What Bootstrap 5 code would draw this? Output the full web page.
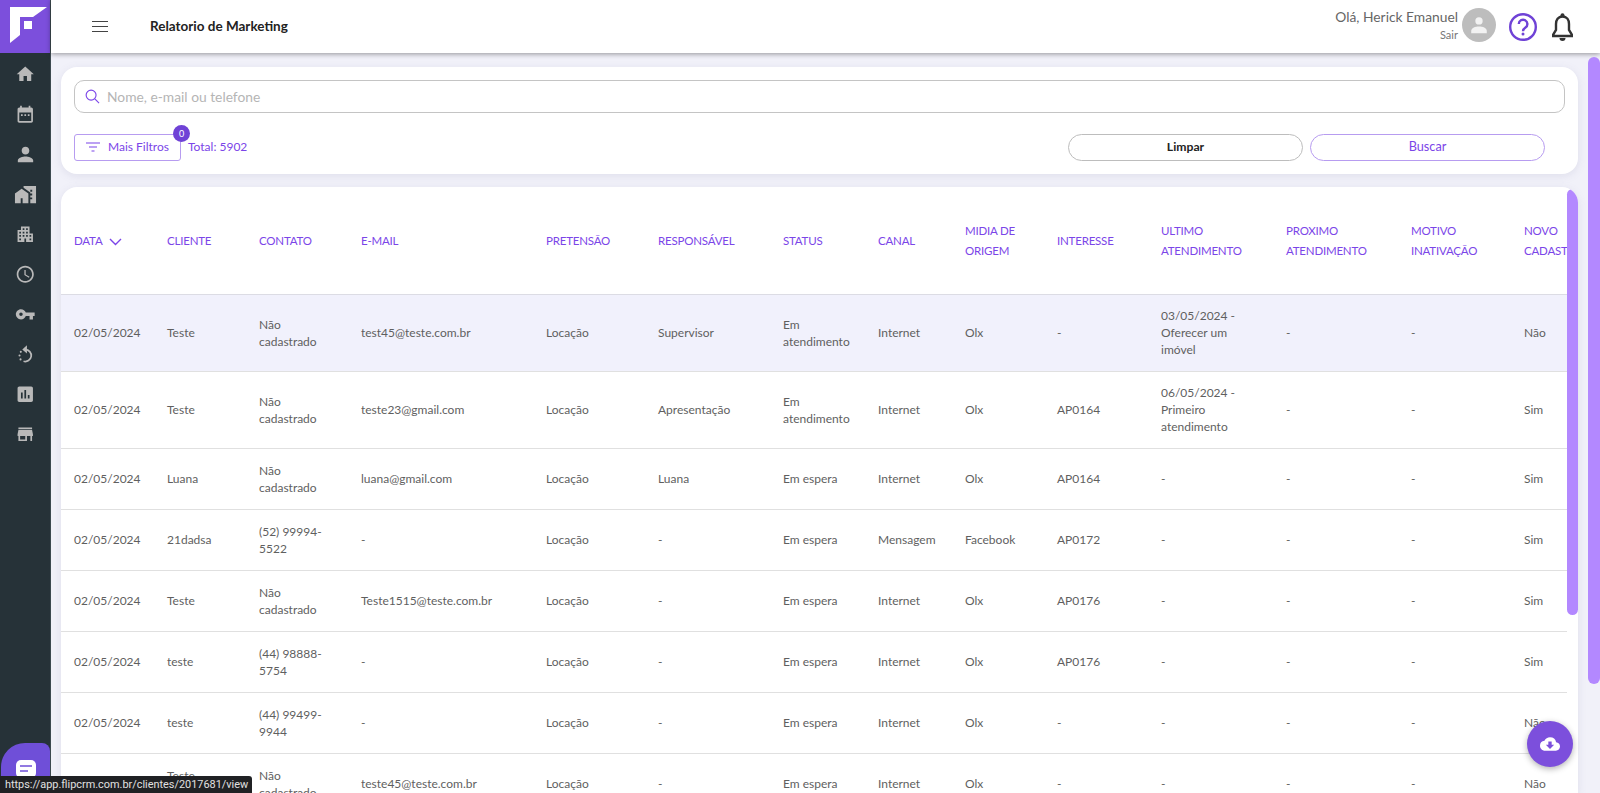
<!DOCTYPE html>
<html lang="pt-BR">
<head>
<meta charset="utf-8">
<title>Relatorio de Marketing</title>
<link href="https://cdn.jsdelivr.net/npm/bootstrap@5.3.0/dist/css/bootstrap.min.css" rel="stylesheet">
<style>
:root{--rp:#7c4fdc;--rp-text:#7b45e8;}
html,body{height:793px;overflow:hidden;}
body{font-family:"Lato","Liberation Sans",sans-serif;font-size:12px;color:#5f5f5f;background:#f1f1f9;}
.app-shell{height:793px;overflow:hidden;}
.side-rail{width:51px;background:#263238;flex:none;border-right:1px solid #3d4a50;}
.logo-box{height:53px;background:var(--rp);}
.rail-icon{height:40px;display:flex;align-items:center;justify-content:center;}
.rail-icon svg{width:20.5px;height:20.5px;fill:#b9b9b9;}
.rail-icon svg.big-glyph{width:23px;height:23px;}
.rail-list{padding-top:1px;}
.top-bar{height:53px;background:#fff;box-shadow:0 1px 5px rgba(0,0,0,.4);z-index:2;flex:none;}
.burger{margin-left:41px;width:16px;}
.burger span{display:block;height:1.5px;background:#444;margin:3.5px 0;}
.page-title{margin-left:42px;font-size:13.5px;font-weight:700;color:#222;}
.hello{font-size:13.8px;color:#666;line-height:17px;margin-top:-2px;}
.bye{font-size:11px;color:#777;line-height:19px;}
.avatar-dot{width:34px;height:34px;border-radius:50%;background:#bdbdbd;margin:-3px 13px 0 4px;}
.help-mark{margin-right:15px;}
.bell-mark{margin-right:27px;}
.work-area{padding:14px 22px 0 10px;min-height:0;}
.panel-box{background:#fff;border-radius:16px;box-shadow:0 2px 8px rgba(120,120,160,.15);}
.filter-box{height:107px;padding:13px 13px 0 13px;margin-bottom:13px;flex:none;}
.search-wrap{height:33px;border:1px solid #c4c4c4;border-radius:10px;padding:0 10px;}
.search-wrap input{border:0;outline:0;font:inherit;font-size:13.8px;flex:1;margin-left:5px;padding-top:2px;}
.search-wrap input::placeholder{color:#b5b5b5;}
.filter-row{margin-top:21px;height:27px;}
.more-btn{width:107px;height:27px;border:1px solid #b79cf0;border-radius:3px;color:var(--rp-text);font-size:12px;background:#fff;padding:0 0 2px;}
.count-dot{top:-9px;right:-9px;width:17px;height:17px;border-radius:50%;background:#6f42d6;color:#fff;font-size:9px;line-height:17px;text-align:center;}
.total-text{color:var(--rp-text);font-size:12px;margin-left:7px;margin-top:-1px;}
.pill-btn{width:235px;height:27px;border-radius:14px;background:#fff;font-size:12.7px;padding:0 0 2px;line-height:23px;}
.pill-clear{border:1px solid #bdbdbd;color:#222;font-weight:700;font-size:12.2px;margin-right:7px;}
.pill-go{border:1px solid #b79cf0;color:var(--rp-text);margin-right:20px;}
.list-box{flex:1;min-height:0;overflow:hidden;position:relative;padding-right:11px;border-radius:16px 16px 0 0;}
.table-clip{overflow:hidden;height:100%;}
.rep-table{table-layout:fixed;width:1550px;margin:0;font-size:12px;}
.rep-table th{height:107px;vertical-align:middle;font-weight:400;color:var(--rp-text);font-size:11.5px;letter-spacing:-.2px;line-height:20px;padding:1px 13px 0;border-bottom:1px solid #dcdce4;}
.rep-table td{vertical-align:middle;padding:6px 13px;line-height:17px;color:#5f5f5f;border-bottom:1px solid #e0e0e0;background:transparent;}
.rep-table tbody tr{height:61px;}
.rep-table tbody tr.tall{height:77px;}
.rep-table tbody tr.hot td{background:#f1f1fc;}
.rep-table col:nth-child(1){width:93px}.rep-table col:nth-child(2){width:92px}.rep-table col:nth-child(3){width:102px}.rep-table col:nth-child(4){width:185px}.rep-table col:nth-child(5){width:112px}.rep-table col:nth-child(6){width:125px}.rep-table col:nth-child(7){width:95px}.rep-table col:nth-child(8){width:87px}.rep-table col:nth-child(9){width:92px}.rep-table col:nth-child(10){width:104px}.rep-table col:nth-child(11){width:125px}.rep-table col:nth-child(12){width:125px}.rep-table col:nth-child(13){width:113px}.rep-table col:nth-child(14){width:100px}
.inner-thumb{position:absolute;top:2px;right:0;width:11px;height:426px;background:#b388ff;border-radius:6px;}
.outer-thumb{position:absolute;top:57px;right:0;width:12px;height:627px;background:#b388ff;border-radius:6px;z-index:3;}
.fab-down{position:absolute;right:27px;bottom:26px;width:46px;height:46px;border-radius:50%;background:var(--rp);box-shadow:0 2px 6px rgba(0,0,0,.3);z-index:4;}
.chat-tab{position:absolute;left:1px;bottom:0;width:49px;height:50px;background:#6f4fd8;border-radius:24px 8px 0 0;z-index:4;}
.chat-glyph{margin-top:17px;}
.link-hint{position:absolute;left:0;bottom:0;height:17px;width:252px;background:#202124;color:#e0e0e0;font-family:"Roboto",sans-serif;font-size:10.9px;line-height:17px;padding-left:5px;white-space:nowrap;border-radius:0 3px 0 0;z-index:5;}
</style>
</head>
<body>
<div class="app-shell d-flex position-relative">
  <aside class="side-rail">
    <div class="logo-box">
      <svg width="50" height="53" viewBox="0 0 50 53"><path fill="#fff" d="M10 7H47L33 17H20V35L10 43Z"/><rect x="24" y="21" width="8" height="8" fill="#fff"/></svg>
    </div>
    <div class="rail-list">
      <div class="rail-icon"><svg viewBox="0 0 24 24"><path d="M10 20v-6h4v6h5v-8h3L12 3 2 12h3v8z"/></svg></div>
      <div class="rail-icon"><svg viewBox="0 0 24 24"><path d="M19 4h-1V2h-2v2H8V2H6v2H5c-1.1 0-2 .9-2 2v14c0 1.1.9 2 2 2h14c1.1 0 2-.9 2-2V6c0-1.1-.9-2-2-2zm0 16H5V10h14zM7 12h2v2H7zm4 0h2v2h-2zm4 0h2v2h-2z"/></svg></div>
      <div class="rail-icon"><svg class="big-glyph" viewBox="0 0 24 24"><path d="M12 12c2.21 0 4-1.79 4-4s-1.79-4-4-4-4 1.79-4 4 1.79 4 4 4zm0 2c-2.67 0-8 1.34-8 4v2h16v-2c0-2.66-5.33-4-8-4z"/></svg></div>
      <div class="rail-icon"><svg class="big-glyph" viewBox="0 0 24 24"><path d="M1 11v10h6v-5h2v5h6V11L8 6zM10 3v1.97l7 5V11h2v2h-2v2h2v2h-2v4h6V3H10zm9 6h-2V7h2v2z"/></svg></div>
      <div class="rail-icon"><svg viewBox="0 0 24 24"><path d="M17 11V3H7v4H3v14h8v-4h2v4h8V11h-4zM7 19H5v-2h2v2zm0-4H5v-2h2v2zm0-4H5V9h2v2zm4 4H9v-2h2v2zm0-4H9V9h2v2zm0-4H9V5h2v2zm4 8h-2v-2h2v2zm0-4h-2V9h2v2zm0-4h-2V5h2v2zm4 12h-2v-2h2v2zm0-4h-2v-2h2v2z"/></svg></div>
      <div class="rail-icon"><svg viewBox="0 0 24 24"><path d="M11.99 2C6.47 2 2 6.48 2 12s4.47 10 9.99 10C17.52 22 22 17.52 22 12S17.52 2 11.99 2zM12 20c-4.42 0-8-3.58-8-8s3.58-8 8-8 8 3.58 8 8-3.58 8-8 8zm.5-13H11v6l5.25 3.15.75-1.23-4.5-2.67z"/></svg></div>
      <div class="rail-icon"><svg viewBox="0 0 24 24"><path d="M12.65 10C11.83 7.67 9.61 6 7 6c-3.31 0-6 2.69-6 6s2.69 6 6 6c2.61 0 4.83-1.67 5.65-4H17v4h4v-4h2v-4H12.65zM7 14c-1.1 0-2-.9-2-2s.9-2 2-2 2 .9 2 2-.9 2-2 2z"/></svg></div>
      <div class="rail-icon"><svg viewBox="0 0 24 24"><path d="M12 6.500a7 7 0 1 1-2 13.700" fill="none" stroke="#b9b9b9" stroke-width="2"/><path d="M14 1.500L8.500 6.500L14 11z"/><circle cx="5.300" cy="13.500" r="1.200"/><circle cx="6.800" cy="9.200" r="1.200"/><circle cx="6.500" cy="18" r="1.200"/></svg></div>
      <div class="rail-icon"><svg viewBox="0 0 24 24"><path d="M19 3H5c-1.100 0-2 .9-2 2v14c0 1.100.9 2 2 2h14c1.100 0 2-.9 2-2V5c0-1.100-.9-2-2-2zM9 17H7v-7h2v7zm4 0h-2V7h2v10zm4 0h-2v-4h2v4z"/></svg></div>
      <div class="rail-icon"><svg viewBox="0 0 24 24"><path d="M20 4H4v2h16V4zm1 10v-2l-1-5H4l-1 5v2h1v6h10v-6h4v6h2v-6h1zm-9 4H6v-4h6v4z"/></svg></div>
    </div>
  </aside>
  <div class="flex-grow-1 d-flex flex-column" style="min-width:0">
    <header class="top-bar d-flex align-items-center">
      <div class="burger"><span></span><span></span><span></span></div>
      <div class="page-title">Relatorio de Marketing</div>
      <div class="ms-auto d-flex align-items-center">
        <div class="text-end"><div class="hello">Olá, Herick Emanuel</div><div class="bye">Sair</div></div>
        <div class="avatar-dot d-flex align-items-center justify-content-center">
          <svg width="22" height="22" viewBox="0 0 24 24" fill="#f2f2f2"><circle cx="12" cy="7.500" r="4"/><path d="M3.500 21v-2.500C3.500 15 8 13.500 12 13.500s8.500 1.500 8.500 5V21z"/></svg>
        </div>
        <svg class="help-mark" width="28" height="28" viewBox="0 0 28 28"><circle cx="14" cy="14" r="12.800" fill="none" stroke="#6f42d6" stroke-width="2.400"/><path d="M9.800 11a4.300 4.300 0 1 1 6.700 3.600c-1.500 1-2.500 1.800-2.500 3.700" fill="none" stroke="#6f42d6" stroke-width="2.400"/><circle cx="14" cy="21" r="1.500" fill="#6f42d6"/></svg>
        <svg class="bell-mark" width="21" height="28" viewBox="0 0 21 28"><path d="M10.500 3.500c-4.500 0-6.500 3.500-6.500 7.500v6L1.200 21.500V23h18.600v-1.500L17 17v-6c0-4-2-7.500-6.500-7.500z" fill="none" stroke="#333" stroke-width="2.400"/><circle cx="10.500" cy="2.300" r="2" fill="#333"/><path d="M7.500 25h6a3 3 0 0 1-6 0z" fill="#333"/></svg>
      </div>
    </header>
    <main class="work-area flex-grow-1 d-flex flex-column">
      <section class="panel-box filter-box">
        <div class="search-wrap d-flex align-items-center">
          <svg width="15" height="15" viewBox="0 0 16 16" fill="none" stroke="#7b45e8" stroke-width="1.200"><circle cx="6.500" cy="6.500" r="5.300"/><path d="M10.500 10.500l4.500 4.500"/></svg>
          <input type="text" placeholder="Nome, e-mail ou telefone">
        </div>
        <div class="filter-row d-flex align-items-center">
          <div class="position-relative">
            <button class="more-btn d-flex align-items-center justify-content-center" type="button">
              <svg width="14" height="10" viewBox="0 0 14 10" class="me-2" stroke="#7b45e8" stroke-width="1.200"><path d="M0 1h14M3 5h8M5.500 9h3"/></svg>Mais Filtros
            </button>
            <span class="count-dot position-absolute">0</span>
          </div>
          <span class="total-text">Total: 5902</span>
          <button class="pill-btn pill-clear ms-auto" type="button">Limpar</button>
          <button class="pill-btn pill-go" type="button">Buscar</button>
        </div>
      </section>
      <section class="panel-box list-box">
        <div class="table-clip">
          <table class="table rep-table">
            <colgroup><col><col><col><col><col><col><col><col><col><col><col><col><col><col></colgroup>
            <thead><tr>
              <th>DATA <svg width="13" height="8" viewBox="0 0 13 8" class="ms-1" fill="none" stroke="#7b45e8" stroke-width="1.400"><path d="M1 1l5.500 5.500L12 1"/></svg></th><th>CLIENTE</th><th>CONTATO</th><th>E-MAIL</th><th>PRETENSÃO</th><th>RESPONSÁVEL</th><th>STATUS</th><th>CANAL</th><th>MIDIA DE ORIGEM</th><th>INTERESSE</th><th>ULTIMO ATENDIMENTO</th><th>PROXIMO ATENDIMENTO</th><th>MOTIVO INATIVAÇÃO</th><th>NOVO CADASTRO</th>
            </tr></thead>
            <tbody>
              <tr class="hot tall"><td>02/05/2024</td><td>Teste</td><td>Não cadastrado</td><td>test45@teste.com.br</td><td>Locação</td><td>Supervisor</td><td>Em atendimento</td><td>Internet</td><td>Olx</td><td>-</td><td>03/05/2024 - Oferecer um imóvel</td><td>-</td><td>-</td><td>Não</td></tr>
              <tr class="tall"><td>02/05/2024</td><td>Teste</td><td>Não cadastrado</td><td>teste23@gmail.com</td><td>Locação</td><td>Apresentação</td><td>Em atendimento</td><td>Internet</td><td>Olx</td><td>AP0164</td><td>06/05/2024 - Primeiro atendimento</td><td>-</td><td>-</td><td>Sim</td></tr>
              <tr><td>02/05/2024</td><td>Luana</td><td>Não cadastrado</td><td>luana@gmail.com</td><td>Locação</td><td>Luana</td><td>Em espera</td><td>Internet</td><td>Olx</td><td>AP0164</td><td>-</td><td>-</td><td>-</td><td>Sim</td></tr>
              <tr><td>02/05/2024</td><td>21dadsa</td><td>(52) 99994-5522</td><td>-</td><td>Locação</td><td>-</td><td>Em espera</td><td>Mensagem</td><td>Facebook</td><td>AP0172</td><td>-</td><td>-</td><td>-</td><td>Sim</td></tr>
              <tr><td>02/05/2024</td><td>Teste</td><td>Não cadastrado</td><td>Teste1515@teste.com.br</td><td>Locação</td><td>-</td><td>Em espera</td><td>Internet</td><td>Olx</td><td>AP0176</td><td>-</td><td>-</td><td>-</td><td>Sim</td></tr>
              <tr><td>02/05/2024</td><td>teste</td><td>(44) 98888-5754</td><td>-</td><td>Locação</td><td>-</td><td>Em espera</td><td>Internet</td><td>Olx</td><td>AP0176</td><td>-</td><td>-</td><td>-</td><td>Sim</td></tr>
              <tr><td>02/05/2024</td><td>teste</td><td>(44) 99499-9944</td><td>-</td><td>Locação</td><td>-</td><td>Em espera</td><td>Internet</td><td>Olx</td><td>-</td><td>-</td><td>-</td><td>-</td><td>Não</td></tr>
              <tr><td>02/05/2024</td><td>Teste - cliente</td><td>Não cadastrado</td><td>teste45@teste.com.br</td><td>Locação</td><td>-</td><td>Em espera</td><td>Internet</td><td>Olx</td><td>-</td><td>-</td><td>-</td><td>-</td><td>Não</td></tr>
            </tbody>
          </table>
        </div>
        <div class="inner-thumb"></div>
      </section>
    </main>
  </div>
  <div class="outer-thumb"></div>
  <div class="fab-down d-flex align-items-center justify-content-center">
    <svg width="20" height="20" viewBox="0 0 24 24" fill="#fff"><path d="M19.350 10.040A7.490 7.490 0 0 0 12 4C9.110 4 6.600 5.640 5.350 8.040A5.994 5.994 0 0 0 0 14c0 3.310 2.690 6 6 6h13c2.760 0 5-2.240 5-5 0-2.640-2.050-4.780-4.650-4.960zM17 13l-5 5-5-5h3V9h4v4h3z"/></svg>
  </div>
  <div class="chat-tab d-flex justify-content-center">
    <svg class="chat-glyph" width="20" height="18" viewBox="0 0 20 18"><rect width="20" height="18" rx="5" fill="#fff"/><path d="M4 6h12M4 11h8" stroke="#6f4fd8" stroke-width="1.500"/></svg>
  </div>
  <div class="link-hint">https://app.flipcrm.com.br/clientes/2017681/view</div>
</div>
</body>
</html>
